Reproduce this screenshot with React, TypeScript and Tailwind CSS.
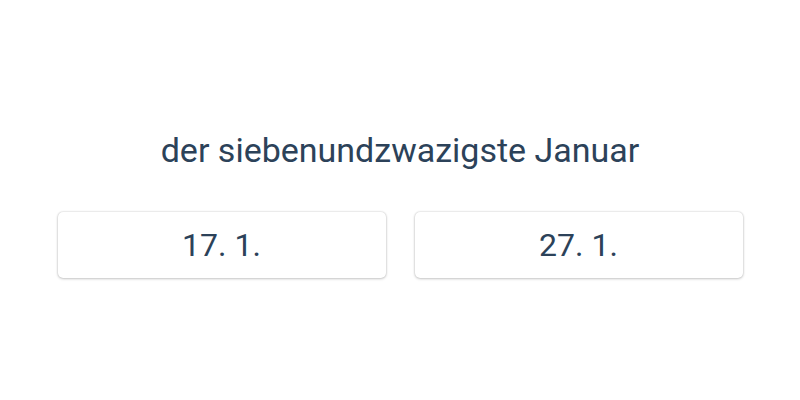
export default function App() {
  return (
    <div className="w-[800px] h-[400px] bg-white flex flex-col items-center pt-[130px] text-[#2c4259]" style={{ fontFamily: "Roboto, 'Noto Sans', sans-serif" }}>
      <div className="text-[34px] leading-[40px]">der siebenundzwazigste Januar</div>
      <div className="mt-[42px] flex gap-[29px]">
        <div className="w-[328px] h-[66px] rounded-[5px] bg-white shadow-[0_0_2px_rgba(0,0,0,0.22),0_1px_3px_rgba(0,0,0,0.18)] flex items-center justify-center text-[32px] leading-[38px]">17. 1.</div>
        <div className="w-[328px] h-[66px] rounded-[5px] bg-white shadow-[0_0_2px_rgba(0,0,0,0.22),0_1px_3px_rgba(0,0,0,0.18)] flex items-center justify-center text-[32px] leading-[38px]">27. 1.</div>
      </div>
    </div>
  );
}
